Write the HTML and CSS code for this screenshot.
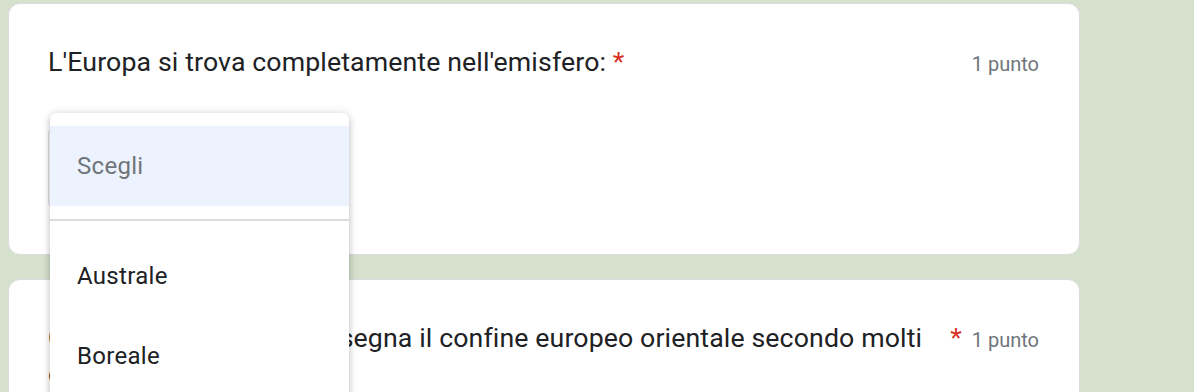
FILE: index.html
```html
<!DOCTYPE html>
<html lang="it">
<head>
<meta charset="utf-8">
<title>Modulo</title>
<link rel="stylesheet" href="styles.css">
</head>
<body>
<div class="page">
  <div class="card">
    <div class="q-row">
      <div class="q-title">L'Europa si trova completamente nell'emisfero: <span class="req">*</span></div>
      <div class="points">1 punto</div>
    </div>
    <div class="select-box"></div>
  </div>
  <div class="card card2">
    <div class="q-row">
      <div class="q-title wrap">Quale catena montuosa segna il confine europeo orientale secondo molti geografi?</div>
      <span class="req star">*</span>
      <div class="points">1 punto</div>
    </div>
  </div>
</div>
<div class="menu">
  <div class="opt opt-sel">Scegli</div>
  <div class="sep"></div>
  <div class="opt">Australe</div>
  <div class="opt">Boreale</div>
  <div class="opt">Entrambi</div>
</div>
</body>
</html>
```
FILE: styles.css
```css
html, body {
  margin: 0;
  padding: 0;
  height: 392px;
  overflow: hidden;
}
body {
  background: #d5e0cd;
  font-family: Roboto, "Noto Sans", Arial, sans-serif;
  color: #202124;
}
.page {
  padding: 3px 0 0 8px;
  width: 1072px;
  display: flex;
  flex-direction: column;
  gap: 24px;
}
.card {
  background: #fff;
  border: 1px solid #dadce0;
  border-radius: 12px;
  padding: 40px 40px 48px 39px;
  height: 252px;
  box-sizing: border-box;
}
.card2 {
  height: 200px;
}
.q-row {
  display: flex;
  align-items: baseline;
}
.q-title {
  font-size: 26.7px;
  line-height: 36px;
  letter-spacing: 0.12px;
}
.q-title.wrap {
  flex: 1;
}
.req {
  color: #d93025;
}
.star {
  font-size: 26.7px;
  line-height: 36px;
  margin: 0 10px 0 4px;
}
.points {
  margin-left: auto;
  font-size: 20px;
  line-height: 36px;
  color: #70757a;
  white-space: nowrap;
}
.select-box {
  margin-top: 46px;
  width: 300px;
  height: 80px;
  border: 1px solid #dadce0;
  border-radius: 6px;
  box-sizing: border-box;
}
.menu {
  position: absolute;
  left: 50px;
  top: 113px;
  width: 299px;
  background: #fff;
  border-radius: 6px;
  padding-top: 13px;
  box-shadow: 0 3px 6px rgba(0,0,0,0.18), 0 0 10px rgba(0,0,0,0.12);
}
.opt {
  height: 80px;
  display: flex;
  align-items: center;
  padding-left: 27px;
  font-size: 24px;
  letter-spacing: 0.3px;
  color: #202124;
}
.opt-sel {
  background: #ecf3fe;
  color: #70757a;
}
.sep {
  height: 2px;
  background: #dadce0;
  margin: 13px 0 15px;
}
```
